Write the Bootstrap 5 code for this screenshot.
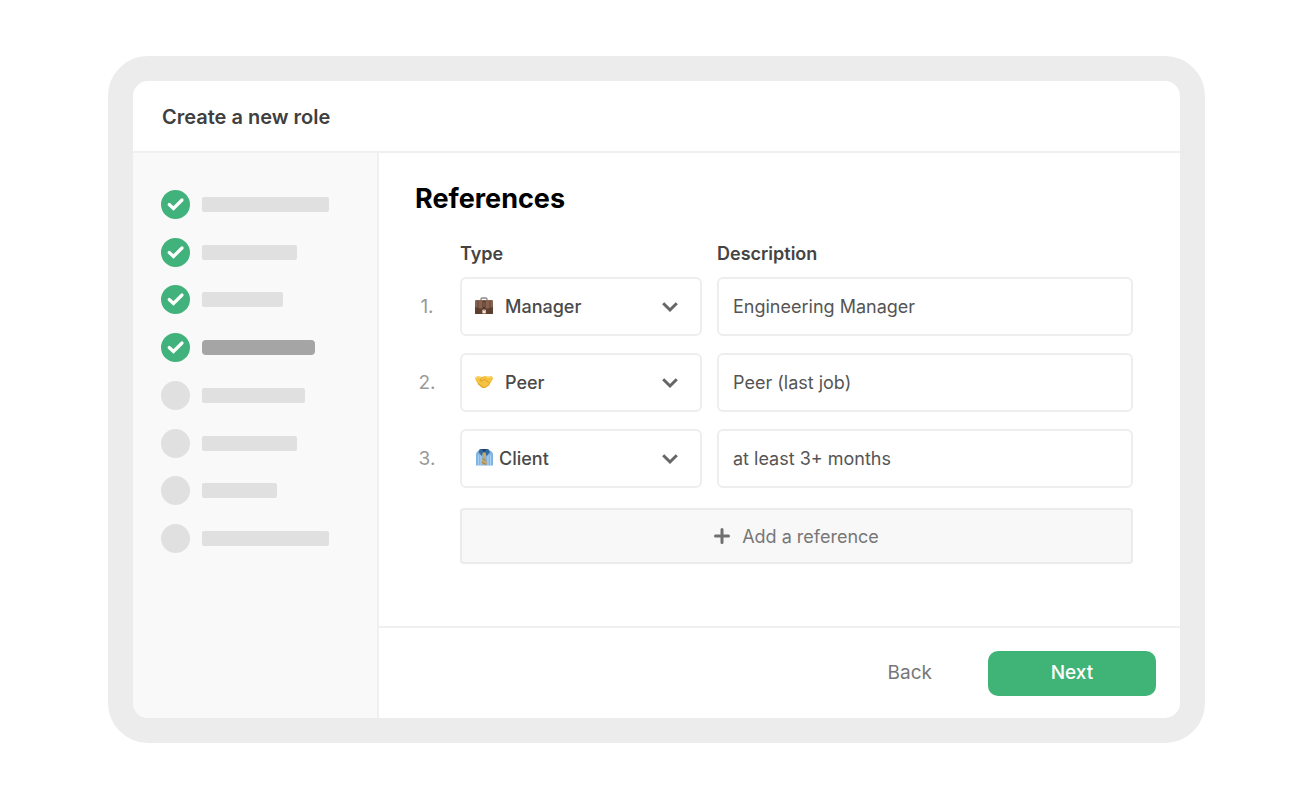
<!DOCTYPE html>
<html lang="en">
<head>
<meta charset="utf-8">
<meta name="viewport" content="width=device-width, initial-scale=1">
<title>Create a new role</title>
<link rel="stylesheet" href="https://cdn.jsdelivr.net/npm/bootstrap@5.3.0/dist/css/bootstrap.min.css">
<style>
  body { font-family: Inter, "Liberation Sans", sans-serif; font-size: 18px; line-height: 24px; color: #555; background: #fff; }
  .page { padding: 56px 109px 56px 108px; }
  .frame { border: 25px solid #ececec; border-radius: 40px; background: #fff; overflow: hidden; }
  .dialog-head { padding: 24px 29px 22px; border-bottom: 2px solid #f0f0f0; }
  .dialog-head h1 { font-size: 20px; line-height: 24px; font-weight: 600; color: #3f3f3f; }
  .steps { width: 246px; padding: 37px 28px; background: #f9f9f9; border-right: 2px solid #f0f0f0; }
  .steps ol { height: 363px; }
  .step-dot { width: 29px; height: 29px; background: #e0e0e0; }
  .step-dot.done { background: #42b27c; }
  .step-bar { height: 15px; border-radius: 2px; background: #e0e0e0; }
  .step-bar.current { background: #a5a5a5; border-radius: 4px; }
  .refs { padding: 30px 47px 62px 36px; }
  .refs h2 { font-size: 27px; line-height: 32px; font-weight: 700; color: #000; margin-bottom: 27px; }
  .ref-grid { display: grid; grid-template-columns: 30px minmax(0, 242fr) minmax(0, 416fr); column-gap: 15px; row-gap: 17px; align-items: center; }
  .col-label { font-size: 18px; font-weight: 600; color: #444; margin-bottom: -6px; line-height: 24px; }
  .num { font-size: 19px; color: #999; width: 24px; }
  .field { height: 59px; border: 2px solid #eee; border-radius: 6px; background: #fff; }
  .type-field { padding-left: 12px; }
  .type-field .form-select { font-size: 18px; font-weight: 500; color: #4a4a4a; padding: 0 40px 0 11px; height: 55px; box-shadow: none; background-color: transparent;
    background-image: url("data:image/svg+xml,%3Csvg xmlns='http://www.w3.org/2000/svg' viewBox='0 0 16 16'%3E%3Cpath fill='none' stroke='%23666' stroke-width='3' d='M1.2 4.2 8 11l6.800-6.800'/%3E%3C/svg%3E");
    background-size: 16px 16px; background-position: right 22px center; }
  .type-field .form-select.snug { padding-left: 5px; }
  .desc-field { font-size: 18px; color: #555; padding: 0 14px; }
  .desc-field:focus { box-shadow: none; color: #555; }
  .add-btn { grid-column: 2 / -1; height: 56px; margin-top: 3px; border: 2px solid #ebebeb; border-radius: 4px; background: #f8f8f8; color: #777; font-size: 18px; }
  .dialog-foot { padding: 23px 24px 22px; border-top: 2px solid #f0f0f0; }
  .back-btn { font-size: 19px; color: #777; text-decoration: none; padding: 0; }
  .next-btn { width: 168px; height: 45px; border-radius: 10px; background: #3fb476; color: #fff; font-size: 19px; font-weight: 500; border: 0; }
  .next-btn:hover { background: #37a269; color: #fff; }
</style>
</head>
<body>
<div class="page">
  <main class="frame">
    <header class="dialog-head"><h1 class="m-0">Create a new role</h1></header>
    <div class="d-flex">
      <nav class="steps flex-shrink-0" aria-label="Progress">
        <ol class="list-unstyled d-flex flex-column justify-content-between m-0" id="steps"></ol>
      </nav>
      <form class="flex-grow-1 d-flex flex-column">
        <section class="refs flex-grow-1">
          <h2 class="mt-0">References</h2>
          <div class="ref-grid">
            <span></span>
            <span class="col-label">Type</span>
            <span class="col-label">Description</span>

            <span class="num text-center">1.</span>
            <div class="field type-field d-flex align-items-center">
              <svg class="flex-shrink-0" width="20" height="20" viewBox="0 0 20 20" aria-hidden="true">
                <path d="M7 3.500V2.300Q7 1 8.300 1h3.400Q13 1 13 2.300v1.200" fill="none" stroke="#8d8888" stroke-width="1.300"/>
                <path d="M2.500 3h15Q19 3 19 5v11.500q0 .5-.5.500h-17q-.5 0-.5-.5V5q0-2 1.500-2z" fill="#5e4030"/>
                <path d="M2.500 3h15Q19 3 19 5v5l-6 1.500H7L1 10V5q0-2 1.500-2z" fill="#866350"/>
                <path d="M4 4v13M16 4v13" stroke="#5d3b2c" stroke-width=".8"/>
                <path d="M8.500 4h3v8h-3z" fill="#553629"/><path d="M9.600 5h.8v5h-.8z" fill="#a57f62"/>
                <path d="M8.400 12.800h3.400v3.600H8.400z" fill="#f8e5da"/><path d="M9.200 12.500h1.800v1.500H9.200z" fill="#c49e8c"/>
              </svg>
              <select class="form-select border-0" aria-label="Type of reference 1"><option>Manager</option><option>Peer</option><option>Client</option></select>
            </div>
            <input class="form-control field desc-field" type="text" aria-label="Description of reference 1" value="Engineering Manager">

            <span class="num text-center">2.</span>
            <div class="field type-field d-flex align-items-center">
              <svg class="flex-shrink-0" width="20" height="20" viewBox="0 0 20 20" aria-hidden="true">
                <path d="M1 4.500 4 3l4 1 2.500-1 3 .5L18 3.200l1 2.300-2 4-2.500 2.500-4 2.500q-1.500 1-3 0L4 11 2 8z" fill="#f5c242"/>
                <path d="M8 4 6 7.500q1.500 1.500 3.500-.5l1.500-.5 5 4" fill="none" stroke="#dc9e2c" stroke-width=".9"/>
                <path d="m4 10.500 4.500 3.500q1.500 1 3 0l4-2.500" fill="none" stroke="#e3a62f" stroke-width="1.100"/>
                <path d="m2 5 2-1 3.500 1M13 4.500l4-.5" stroke="#ffdd70" stroke-width="1" fill="none"/>
              </svg>
              <select class="form-select border-0" aria-label="Type of reference 2"><option>Peer</option><option>Manager</option><option>Client</option></select>
            </div>
            <input class="form-control field desc-field" type="text" aria-label="Description of reference 2" value="Peer (last job)">

            <span class="num text-center">3.</span>
            <div class="field type-field d-flex align-items-center">
              <svg class="flex-shrink-0" width="20" height="20" viewBox="0 0 20 20" aria-hidden="true">
                <path d="M6 0h8l4 3q1 1 1 3v10.500H2V6q0-2 1-3z" fill="#7fb3e3"/>
                <path d="M4.500 6v10M7 4v12M14 4v12M16.500 6v10" stroke="#acd2f3" stroke-width="1.100"/>
                <path d="M6 0h8l2 3-3 4-2.800-3.500L7.500 7 4.500 3z" fill="#336a9e"/>
                <path d="M7.500 0h5.200L10.200 3.500z" fill="#1c426c"/>
                <path d="M8.900 3.500h2.700l.5 2-.8 1.300 1.700 8.700H7.400l1.700-8.700-.8-1.300z" fill="#c8a965"/>
                <path d="m8.600 9.500 3 2M8 13l4 2.500" stroke="#8e7650" stroke-width=".9"/>
              </svg>
              <select class="form-select border-0 snug" aria-label="Type of reference 3"><option>Client</option><option>Manager</option><option>Peer</option></select>
            </div>
            <input class="form-control field desc-field" type="text" aria-label="Description of reference 3" value="at least 3+ months">

            <button type="button" class="btn add-btn d-flex align-items-center justify-content-center gap-1">
              <svg width="24" height="16" viewBox="0 0 24 16" aria-hidden="true"><path d="M8 1.500v13M1.500 8h13" stroke="#707070" stroke-width="3" stroke-linecap="round"/></svg>
              Add a reference
            </button>
          </div>
        </section>
        <footer class="dialog-foot d-flex justify-content-end align-items-center">
          <button type="button" class="btn back-btn border-0 me-5">Back</button>
          <button type="button" class="btn next-btn ms-2">Next</button>
        </footer>
      </form>
    </div>
  </main>
</div>
<script src="https://cdn.jsdelivr.net/npm/bootstrap@5.3.0/dist/js/bootstrap.bundle.min.js"></script>
<script>
  const steps = [[127, 1], [95, 1], [81, 1], [113, 1, 1], [103], [95], [75], [127]];
  const tick = '<svg class="d-block" width="29" height="29" viewBox="0 0 29 29" aria-hidden="true"><path d="m8.200 14.500 4.300 4L21 10" fill="none" stroke="#fff" stroke-width="3.200" stroke-linecap="round"/></svg>';
  document.getElementById('steps').innerHTML = steps.map(([width, done, current]) =>
    `<li class="d-flex align-items-center">
      <span class="step-dot rounded-circle flex-shrink-0 me-2 ${done ? 'done' : ''}">${done ? tick : ''}</span>
      <span class="step-bar ms-1 ${current ? 'current' : ''}" style="width:${width}px"></span>
    </li>`).join('');
</script>
</body>
</html>
